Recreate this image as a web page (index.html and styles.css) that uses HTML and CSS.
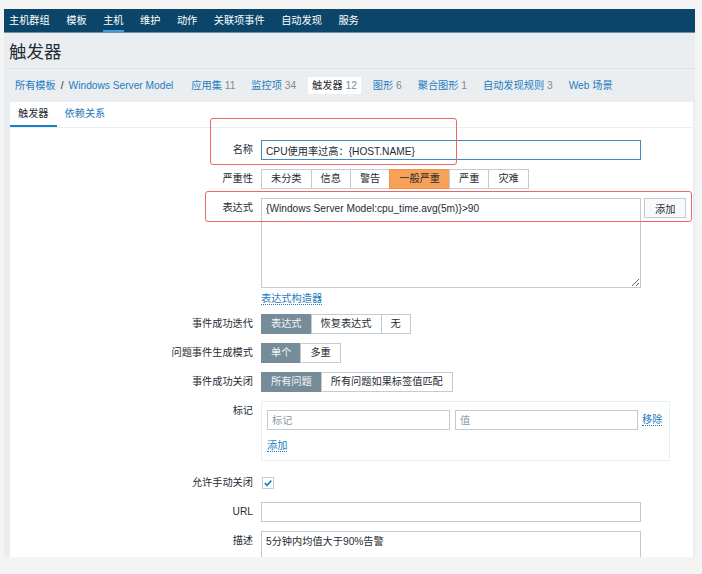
FILE: index.html
```html
<!DOCTYPE html>
<html lang="zh-CN">
<head>
    <meta charset="UTF-8">
    <title>触发器</title>
    <link rel="stylesheet" href="styles.css">
</head>
<body>

<div class="page">
    <ul class="topnav">
        <li>主机群组</li>
        <li>模板</li>
        <li class="active">主机</li>
        <li>维护</li>
        <li>动作</li>
        <li>关联项事件</li>
        <li>自动发现</li>
        <li>服务</li>
    </ul>

    <div class="header">
        <h1>触发器</h1>
        <div class="crumbs">
            <span class="crumb root"><a>所有模板</a><span class="sep">/</span><a>Windows Server Model</a></span>
            <span class="crumb"><a>应用集</a> <span class="count">11</span></span>
            <span class="crumb"><a>监控项</a> <span class="count">34</span></span>
            <span class="crumb selected">触发器 <span class="count">12</span></span>
            <span class="crumb"><a>图形</a> <span class="count">6</span></span>
            <span class="crumb"><a>聚合图形</a> <span class="count">1</span></span>
            <span class="crumb"><a>自动发现规则</a> <span class="count">3</span></span>
            <span class="crumb"><a>Web 场景</a></span>
        </div>
    </div>

    <div class="panel">
        <div class="tabs">
            <span class="tab active">触发器</span>
            <span class="tab">依赖关系</span>
        </div>

        <div class="form">
            <label class="lbl">名称</label>
            <div><input class="field focus" type="text" value="CPU使用率过高：{HOST.NAME}"></div>

            <label class="lbl">严重性</label>
            <div class="seg">
                <span>未分类</span><span>信息</span><span>警告</span><span class="sev-on">一般严重</span><span>严重</span><span>灾难</span>
            </div>

            <label class="lbl">表达式</label>
            <div>
                <div class="expr">
                    <textarea class="area">{Windows Server Model:cpu_time.avg(5m)}>90</textarea>
                    <button class="btn">添加</button>
                </div>
                <a class="dotted builder">表达式构造器</a>
            </div>

            <label class="lbl">事件成功迭代</label>
            <div class="seg">
                <span class="on">表达式</span><span>恢复表达式</span><span>无</span>
            </div>

            <label class="lbl">问题事件生成模式</label>
            <div class="seg">
                <span class="on">单个</span><span>多重</span>
            </div>

            <label class="lbl">事件成功关闭</label>
            <div class="seg">
                <span class="on">所有问题</span><span>所有问题如果标签值匹配</span>
            </div>

            <label class="lbl">标记</label>
            <div class="tagbox">
                <div class="tagrow">
                    <input class="field tag" type="text" placeholder="标记">
                    <input class="field tag" type="text" placeholder="值">
                    <a class="dotted">移除</a>
                </div>
                <a class="dotted add">添加</a>
            </div>

            <label class="lbl check-lbl">允许手动关闭</label>
            <div class="check-cell">
                <span class="checkbox">
                    <svg width="10" height="10" viewBox="0 0 10 10"><path d="M1.8 5.2 L4 7.3 L8.3 2.6" fill="none" stroke="#1b7fc4" stroke-width="1.6"/></svg>
                </span>
            </div>

            <label class="lbl">URL</label>
            <div><input class="field" type="text"></div>

            <label class="lbl">描述</label>
            <div><textarea class="area desc">5分钟内均值大于90%告警</textarea></div>
        </div>
    </div>

    <div class="mark mark-name"></div>
    <div class="mark mark-expr"></div>
</div>

</body>
</html>
```

FILE: styles.css
```css
body {
    margin: 0;
    background: #f4f4f4;
    font-family: "Liberation Sans", "Noto Sans CJK SC", sans-serif;
    font-size: 10.2px;
    color: #1f2c33;
}

a {
    color: #1d7cc0;
    cursor: pointer;
}

.page {
    position: relative;
    margin: 9px 0 0 4px;
    width: 691px;
    height: 548px;
    background: #ebeef0;
    overflow: hidden;
}

.topnav {
    display: flex;
    margin: 0;
    padding: 0 0 0 5px;
    list-style: none;
    height: 24px;
    background: #0b466a;
    border-bottom: 1px solid #6f8ea3;
    box-sizing: border-box;
}

.topnav li {
    margin-right: 16.5px;
    line-height: 23px;
    color: #fff;
}

.topnav li.active {
    box-shadow: inset 0 -2px 0 #3c9ee0;
}

.header {
    margin-left: 5px;
}

.header h1 {
    margin: 0;
    padding: 9px 0 6px;
    font-size: 17.5px;
    font-weight: normal;
    line-height: 20px;
    border-bottom: 1px solid #dde3e7;
}

.crumbs {
    display: flex;
    align-items: center;
    gap: 8px;
    padding: 8px 0 8px 2px;
}

.crumb {
    padding: 3px 4px;
    line-height: 11px;
    white-space: nowrap;
}

.crumb.root {
    margin-right: 2px;
}

.crumb .sep {
    margin: 0 5px;
    color: #1f2c33;
}

.crumb .count {
    color: #7b8a93;
}

.crumb.selected {
    background: #fff;
}

.panel {
    margin: 0 2px 0 6px;
    height: 456px;
    background: #fff;
    overflow: hidden;
}

.tabs {
    display: flex;
    height: 26px;
    border-bottom: 1px solid #ebeef0;
    box-sizing: border-box;
}

.tab {
    padding: 0 8px;
    line-height: 24px;
    color: #1d7cc0;
}

.tab.active {
    color: #1f2c33;
    border-bottom: 2px solid #1b7fc4;
}

.form {
    display: grid;
    grid-template-columns: 243px 1fr;
    column-gap: 8px;
    row-gap: 9px;
    padding-top: 12px;
}

.lbl {
    text-align: right;
    line-height: 20px;
}

.field {
    display: block;
    width: 380px;
    height: 20px;
    margin: 0;
    padding: 0 4px;
    box-sizing: border-box;
    border: 1px solid #c2cbd1;
    font: inherit;
    color: #1f2c33;
    outline: none;
}

.field.focus {
    border-color: #3f8ac2;
}

.field::placeholder {
    color: #8e9aa1;
}

.seg {
    display: flex;
}

.seg span {
    height: 20px;
    line-height: 18px;
    padding: 0 9px;
    box-sizing: border-box;
    border: 1px solid #c4ccd1;
    margin-right: -1px;
    background: #fff;
    white-space: nowrap;
}

.seg span.on {
    background: #768d99;
    border-color: #768d99;
    color: #f2f4f5;
}

.seg span.sev-on {
    background: #f8a158;
    border-color: #e99450;
}

.expr {
    display: flex;
    align-items: flex-start;
    gap: 3px;
}

.area {
    display: block;
    width: 380px;
    height: 90px;
    margin: 0;
    padding: 3px 4px;
    box-sizing: border-box;
    border: 1px solid #c2cbd1;
    font: inherit;
    line-height: 14px;
    color: #1f2c33;
    outline: none;
}

.area.desc {
    height: 60px;
    padding-top: 3px;
}

.btn {
    height: 20px;
    padding: 0 10px;
    border: 1px solid #c4ccd1;
    background: #f8f9fa;
    font: inherit;
    color: #1f2c33;
}

.dotted {
    text-decoration: none;
    border-bottom: 1px dotted #1d7cc0;
    line-height: 11px;
}

.builder {
    display: inline-block;
    margin-top: 5px;
}

.tagbox {
    width: 409px;
    height: 60px;
    padding: 8px 5px 0;
    box-sizing: border-box;
    border: 1px solid #ebeef0;
}

.tagrow {
    display: flex;
    align-items: center;
    gap: 5px;
}

.field.tag {
    width: 183px;
}

.tagrow a {
    margin-left: -1px;
}

.tagbox .add {
    display: inline-block;
    margin-top: 10px;
}

.check-lbl {
    margin-top: 3px;
}

.check-cell {
    display: flex;
    align-items: center;
    margin-top: 3px;
}

.checkbox {
    display: flex;
    align-items: center;
    justify-content: center;
    width: 12px;
    height: 12px;
    margin-left: 1px;
    box-sizing: border-box;
    border: 1px solid #c4ccd1;
    background: #fff;
}

.mark {
    position: absolute;
    border: 1.5px solid #f06464;
    border-radius: 3px;
    box-sizing: border-box;
}

.mark-name {
    left: 206px;
    top: 109px;
    width: 247px;
    height: 47px;
}

.mark-expr {
    left: 201px;
    top: 182px;
    width: 487px;
    height: 31px;
}
```
